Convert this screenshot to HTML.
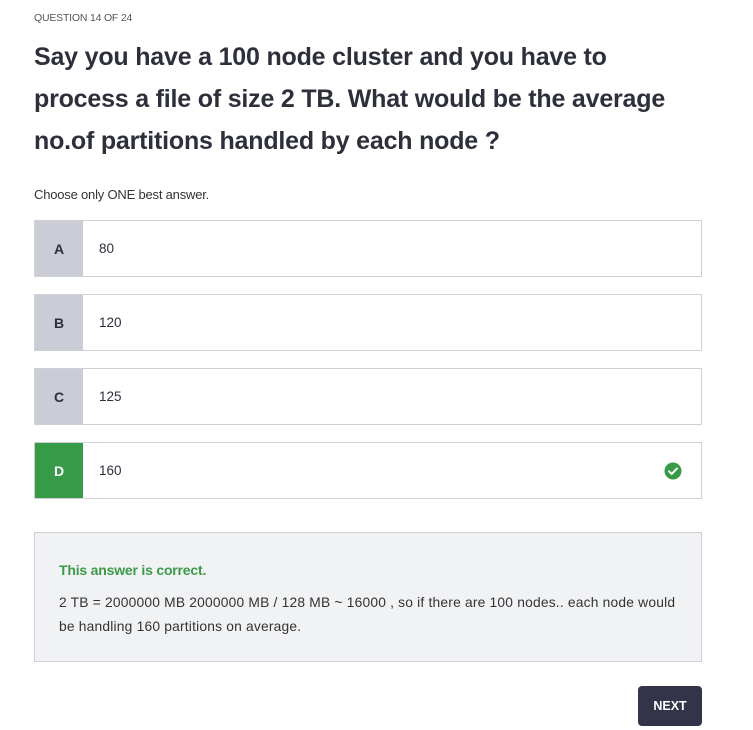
<!DOCTYPE html>
<html><head><meta charset="utf-8"><style>
*{box-sizing:border-box;margin:0;padding:0}
body{width:753px;height:730px;background:#fff;font-family:"Liberation Sans",sans-serif;color:#2d2f3b;position:relative;overflow:hidden}
.qn{position:absolute;left:34px;top:12px;font-size:10.5px;color:#555;letter-spacing:-0.2px}
h1{position:absolute;left:34px;top:36px;font-size:25px;line-height:42px;font-weight:bold;color:#2d2f3b;letter-spacing:-0.2px;white-space:nowrap}
.ch{position:absolute;left:34px;top:187px;font-size:13px;color:#333;letter-spacing:-0.2px}
.opt{position:absolute;left:34px;width:668px;height:57px;border:1px solid #d0d0d6;background:#fff}
.opt .l{position:absolute;left:0;top:0;width:48px;height:100%;background:#cbcdd6;font-weight:bold;font-size:14px;display:flex;align-items:center;justify-content:center;color:#2d2f3b}
.opt .t{position:absolute;left:64px;top:20px;font-size:13.5px}
.opt.ok .l{background:#369a47;color:#fff}
.fb{position:absolute;left:34px;top:532px;width:668px;height:130px;border:1px solid #d0d0d6;background:#f1f2f4}
.fb .h{position:absolute;left:24px;top:29px;font-size:14px;font-weight:bold;color:#3c9a48;letter-spacing:-0.2px}
.fb .b{position:absolute;left:24px;top:58px;width:640px;font-size:13.8px;line-height:24px;color:#333;letter-spacing:0.2px;white-space:nowrap}
.nx{position:absolute;left:638px;top:686px;width:64px;height:40px;background:#33334a;border-radius:4px;color:#fff;font-weight:bold;font-size:12.5px;display:flex;align-items:center;justify-content:center}
</style></head><body>
<div class="qn">QUESTION 14 OF 24</div>
<h1>Say you have a 100 node cluster and you have to<br>process a file of size 2 TB. What would be the average<br>no.of partitions handled by each node ?</h1>
<div class="ch">Choose only ONE best answer.</div>
<div class="opt" style="top:220px"><div class="l">A</div><div class="t">80</div></div>
<div class="opt" style="top:294px"><div class="l">B</div><div class="t">120</div></div>
<div class="opt" style="top:368px"><div class="l">C</div><div class="t">125</div></div>
<div class="opt ok" style="top:442px"><div class="l">D</div><div class="t">160</div>
<svg style="position:absolute;left:629px;top:19px" width="18" height="18" viewBox="0 0 18 18"><circle cx="9" cy="9" r="8.5" fill="#369a47"/><path d="M5 9.3l2.7 2.6L13 6.5" stroke="#fff" stroke-width="2" fill="none" stroke-linecap="round" stroke-linejoin="round"/></svg></div>
<div class="fb"><div class="h">This answer is correct.</div><div class="b">2 TB = 2000000 MB 2000000 MB / 128 MB ~ 16000 , so if there are 100 nodes.. each node would<br>be handling 160 partitions on average.</div></div>
<div class="nx">NEXT</div>
</body></html>
